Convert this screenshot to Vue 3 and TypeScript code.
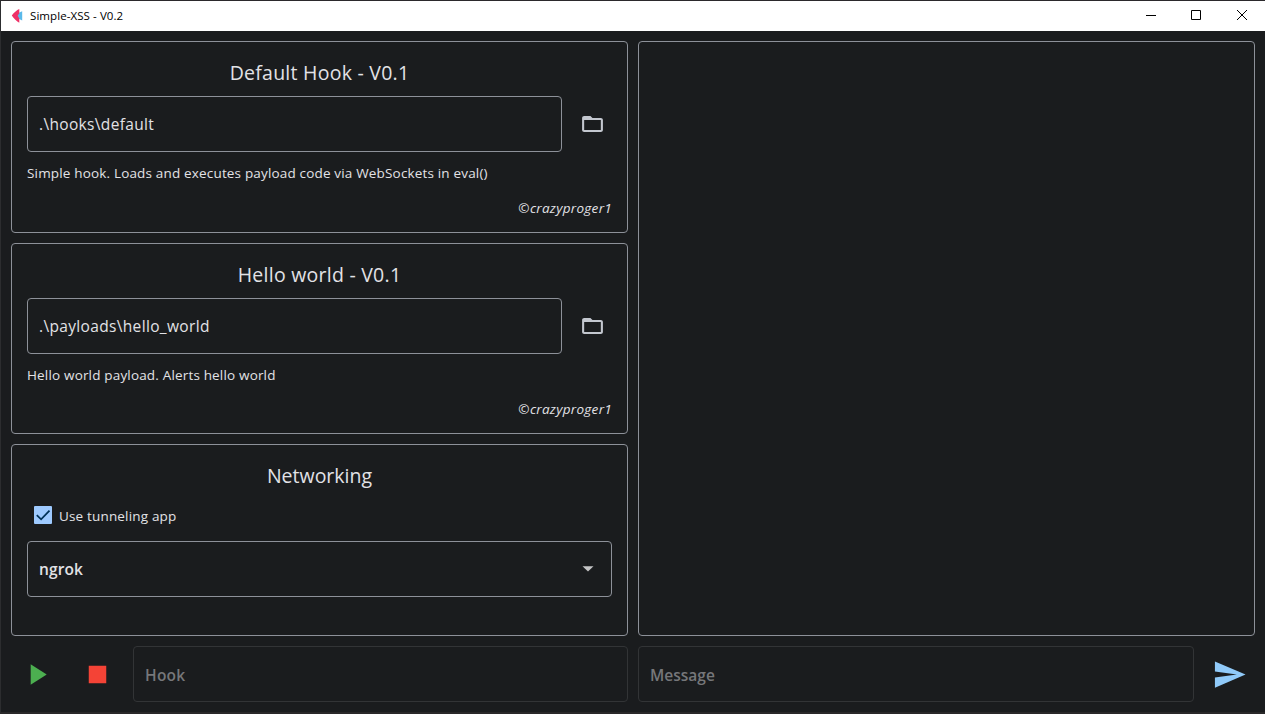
<script setup lang="ts">
import { ref } from 'vue'

interface Source {
  id: string
  title: string
  path: string
  description: string
  author: string
}

const sources: Source[] = [
  {
    id: 'hook',
    title: 'Default Hook - V0.1',
    path: '.\\hooks\\default',
    description: 'Simple hook. Loads and executes payload code via WebSockets in eval()',
    author: '©crazyproger1',
  },
  {
    id: 'payload',
    title: 'Hello world - V0.1',
    path: '.\\payloads\\hello_world',
    description: 'Hello world payload. Alerts hello world',
    author: '©crazyproger1',
  },
]

const tunneling = ref(true)
const tunnelApp = ref('ngrok')
</script>

<template>
  <div class="window">
    <header class="titlebar">
      <svg class="logo" width="12" height="16" viewBox="0 0 12 16">
        <path d="M6.2 5.400 11.200 3.200v9.200L6.200 10z" fill="#5ab9ea" />
        <path d="M8.300.9C5.800 2 2.600 4.800.8 7.500c2 2.900 5 5.800 7.500 7.200V10.400L6.700 7.800 8.300 5.200z" fill="#ee3167" />
      </svg>
      <span class="caption">Simple-XSS - V0.2</span>
      <div class="controls">
        <svg width="46" height="30" viewBox="0 0 46 30"><path d="M18 14.500h10" /></svg>
        <svg width="46" height="30" viewBox="0 0 46 30"><path d="M17.500 9.500h9v9h-9z" /></svg>
        <svg width="45" height="30" viewBox="0 0 45 30"><path d="M17 9l10 10M27 9 17 19" /></svg>
      </div>
    </header>

    <main class="body">
      <section class="column">
        <article v-for="s in sources" :key="s.id" class="panel" :class="s.id">
          <h2 class="title">{{ s.title }}</h2>
          <div class="picker">
            <div class="field path">{{ s.path }}</div>
            <button class="icon-button folder" type="button">
              <svg width="25" height="24" viewBox="0 0 24 24" preserveAspectRatio="none">
                <path fill-rule="evenodd" d="M10 4H4c-1.100 0-1.990.9-1.990 2L2 18c0 1.100.9 2 2 2h16c1.100 0 2-.9 2-2V8c0-1.100-.9-2-2-2h-8l-2-2zM20 18H4V8h16v10z" fill="#c3c7cf" />
              </svg>
            </button>
          </div>
          <p class="description">{{ s.description }}</p>
          <p class="author">{{ s.author }}</p>
        </article>

        <article class="panel">
          <h2 class="title network">Networking</h2>
          <label class="check" @click="tunneling = !tunneling">
            <svg width="18" height="18" viewBox="0 0 18 18">
              <rect width="18" height="18" rx="1" fill="#9ecaff" />
              <path v-if="tunneling" d="M2.800 9.200 7.100 13.300 15.500 4.700" fill="none" stroke="#003258" stroke-width="1.8" />
            </svg>
            <span>Use tunneling app</span>
          </label>
          <div class="field select">
            <span>{{ tunnelApp }}</span>
            <svg width="12" height="6" viewBox="0 0 12 6"><path d="M.5.3h11L6 5.600z" fill="#c4c5c6" /></svg>
          </div>
        </article>
      </section>

      <section class="panel log"></section>

      <footer class="actions">
        <button class="icon-button" type="button">
          <svg width="35" height="35" viewBox="0 0 24 24"><path d="M8 5v14l11-7z" fill="#4caf50" /></svg>
        </button>
        <button class="icon-button" type="button">
          <svg width="35" height="35" viewBox="0 0 24 24"><path d="M6 6h12v12H6z" fill="#f44336" /></svg>
        </button>
        <div class="field muted hook-input">Hook</div>
      </footer>
      <footer class="actions">
        <div class="field muted">Message</div>
        <button class="icon-button" type="button">
          <svg width="35" height="35" viewBox="0 0 24 24"><path d="M2.010 21 23 12 2.010 3 2 10l15 2-15 2z" fill="#90caf9" /></svg>
        </button>
      </footer>
    </main>
  </div>
</template>

<style>
body {
  margin: 0;
  overflow: hidden;
}
</style>

<style scoped>
* {
  box-sizing: border-box;
}
.window {
  width: 1265px;
  height: 714px;
  display: flex;
  flex-direction: column;
  background: #1a1c1e;
  border-top: 1px solid #2b292c;
  border-left: 1px solid #2c2d2f;
  border-bottom: 2px solid #292829;
  color: #e2e2e6;
  font-family: "Open Sans", "Noto Sans", sans-serif;
}
.titlebar {
  height: 30px;
  flex: none;
  display: flex;
  align-items: center;
  padding-left: 10px;
  background: #fff;
  color: #000;
}
.logo {
  flex: none;
  margin-bottom: 1px;
}
.caption {
  margin-left: 7px;
  font-size: 11.5px;
  line-height: 30px;
  height: 30px;
  letter-spacing: 0.08px;
}
.controls {
  margin-left: auto;
  display: flex;
}
.controls path {
  fill: none;
  stroke: #000;
  stroke-width: 1;
}
.body {
  flex: 1;
  min-height: 0;
  display: grid;
  grid-template-columns: 617px 617px;
  grid-template-rows: 595px 56px;
  gap: 10px;
  padding: 10px;
}
.column {
  display: grid;
  grid-template-rows: repeat(3, minmax(0, 1fr));
  gap: 10px;
}
.panel {
  display: flex;
  flex-direction: column;
  border: 1px solid #8d9199;
  border-radius: 4px;
  padding: 15px;
}
.title {
  margin: 0 0 10px;
  height: 29px;
  font-size: 19.5px;
  font-weight: 400;
  line-height: 31px;
  letter-spacing: 0.25px;
  text-align: center;
}
.title.network {
  letter-spacing: 0;
}
.picker {
  display: flex;
  align-items: center;
  gap: 10px;
}
.field {
  flex: 1;
  height: 56px;
  display: flex;
  align-items: center;
  padding: 0 11px;
  border: 1px solid #8d9199;
  border-radius: 4px;
  font-size: 15.5px;
}
.path {
  letter-spacing: 0.34px;
}
.icon-button {
  width: 51px;
  height: 56px;
  flex: none;
  display: flex;
  align-items: center;
  justify-content: center;
  padding: 0;
  border: 0;
  background: none;
}
.icon-button.folder {
  width: 40px;
}
.description {
  margin: 10px 0 0;
  font-size: 13.5px;
  line-height: 22px;
  letter-spacing: 0.17px;
  white-space: nowrap;
}
.author {
  margin: 13px 0 0;
  font-size: 13.5px;
  line-height: 22px;
  letter-spacing: 0.3px;
  font-style: italic;
  text-align: right;
}
.payload .author {
  margin-top: 12px;
}
.check {
  height: 32px;
  display: flex;
  align-items: center;
  padding-left: 7px;
  gap: 7px;
  font-size: 13.5px;
  letter-spacing: 0.17px;
}
.check span {
  padding-top: 2px;
}
.select {
  flex: none;
  margin-top: 10px;
  justify-content: space-between;
  padding-right: 17px;
  font-weight: 600;
  letter-spacing: 0.1px;
}
.actions {
  display: flex;
  gap: 10px;
}
.muted {
  padding-top: 2px;
  border-color: #323436;
  color: #76777a;
  font-weight: 600;
}
.hook-input {
  letter-spacing: 0.25px;
}
</style>
